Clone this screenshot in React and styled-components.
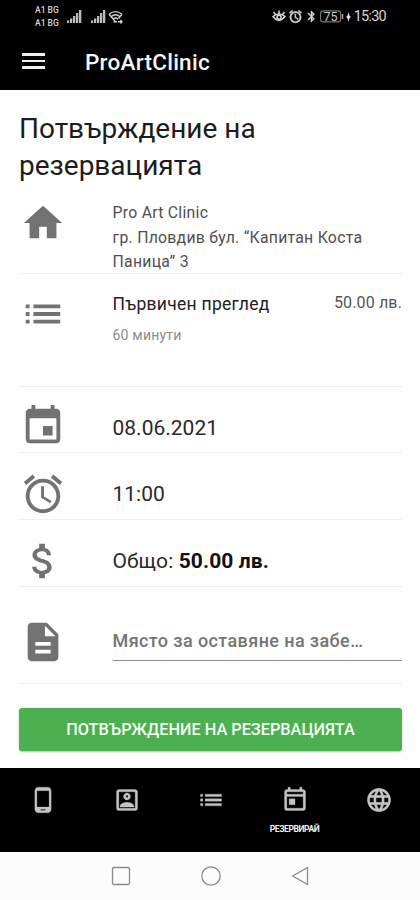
import React from "react";
import styled, { createGlobalStyle } from "styled-components";

const GlobalStyle = createGlobalStyle`
  * { box-sizing: border-box; }
  body { margin: 0; background: #fefefe; font-family: Roboto, "Noto Sans", sans-serif; }
`;

const Screen = styled.div`
  width: 420px;
  height: 900px;
  display: flex;
  flex-direction: column;
  background: #fefefe;
  overflow: hidden;
`;

const StatusBar = styled.div`
  height: 34px;
  flex: none;
  display: flex;
  justify-content: space-between;
  align-items: flex-start;
  padding: 4px 34px 0 35px;
  background: #000;
  color: #d6d6d6;
`;

const StatusGroup = styled.div`
  display: flex;
  align-items: center;
  height: 25px;
  gap: ${(p) => p.$gap || 0}px;
`;

const Carrier = styled.div`
  width: 24px;
  margin-right: 8px;
  font-size: 8.5px;
  line-height: 12.5px;
  font-weight: 500;
  white-space: nowrap;
`;

const Clock = styled.div`
  margin-left: 1px;
  font-size: 14.5px;
  letter-spacing: -0.75px;
  line-height: 25px;
`;

const AppBar = styled.header`
  height: 56px;
  flex: none;
  display: flex;
  align-items: center;
  padding-left: 22px;
  background: #000;
  color: #f6f6f6;
`;

const MenuIcon = styled.div`
  display: grid;
  gap: 4px;
  width: 23px;
  margin-right: 40px;
  margin-top: -2px;
`;

const MenuBar = styled.span`
  height: 2.6px;
  background: #f0f0f0;
`;

const AppTitle = styled.div`
  font-size: 22.5px;
  font-weight: 500;
  letter-spacing: 0.25px;
  line-height: 55px;
`;

const Content = styled.main`
  flex: 1;
  padding: 20px 18px 0 19px;
`;

const Title = styled.h1`
  margin: 0;
  height: 83px;
  font-size: 28px;
  line-height: 37px;
  font-weight: 400;
  letter-spacing: 0;
  color: #1c1c1c;
`;

const Row = styled.section`
  height: ${(p) => p.$height}px;
  display: flex;
  align-items: flex-start;
  padding-top: ${(p) => p.$top || 0}px;
  border-bottom: 1px solid #efefef;
`;

const RowIcon = styled.div`
  flex: none;
  width: 93.5px;
  height: 46px;
  margin-top: ${(p) => p.$shift || 0}px;
  padding-left: 0.5px;
  color: #727272;
  svg { display: block; }
`;

const RowBody = styled.div`
  flex: 1;
  min-width: 0;
`;

const Address = styled.div`
  padding-top: 1px;
  font-size: 15.8px;
  line-height: 24.5px;
  letter-spacing: 0.26px;
  color: #505050;
`;

const ServiceHead = styled.div`
  display: flex;
  justify-content: space-between;
  line-height: 24px;
`;

const ServiceName = styled.div`
  font-size: 17.5px;
  letter-spacing: 0.28px;
  color: #222;
`;

const Price = styled.div`
  font-size: 16px;
  line-height: 22px;
  letter-spacing: 0.15px;
  color: #555;
`;

const Duration = styled.div`
  margin-top: 10px;
  font-size: 14px;
  line-height: 18px;
  letter-spacing: 0.2px;
  color: #8c8c8c;
`;

const Value = styled.div`
  font-size: 21px;
  line-height: 26px;
  letter-spacing: ${(p) => p.$spacing || 0}px;
  color: #2a2a2a;
  b { font-weight: 700; color: #111; }
`;

const NoteField = styled.div`
  height: 33px;
  padding-top: 1px;
  border-bottom: 1px solid #8f8f8f;
  font-size: 18px;
  line-height: 24px;
  font-weight: 500;
  letter-spacing: 0.4px;
  color: #757575;
  white-space: nowrap;
`;

const ConfirmButton = styled.button`
  display: block;
  width: 383px;
  height: 43px;
  margin: 24px 0 0;
  padding: 0;
  border: 0;
  border-radius: 3px;
  background: #4caf50;
  box-shadow: 0 1px 2px rgba(0, 0, 0, 0.28);
  color: #f6fff6;
  font: 500 16.3px/43px Roboto, "Noto Sans", sans-serif;
  white-space: nowrap;
`;

const TabBar = styled.nav`
  height: 84px;
  flex: none;
  display: grid;
  grid-template-columns: repeat(5, 84px);
  background: #000;
  color: #c4c4c4;
`;

const Tab = styled.div`
  display: flex;
  flex-direction: column;
  align-items: center;
  padding: 17.5px 0 0 1px;
  svg { display: block; }
`;

const TabLabel = styled.span`
  margin-top: 10px;
  font-size: 8.5px;
  line-height: 10px;
  font-weight: 700;
  letter-spacing: -0.4px;
  color: #f0f0f0;
`;

const SystemNav = styled.div`
  height: 48px;
  flex: none;
  display: flex;
  justify-content: center;
  align-items: center;
  gap: 68px;
  padding-left: 1px;
  background: #fcfcfc;
  svg { display: block; }
`;

const paths = {
  home: "M10 20v-6h4v6h5v-8h3L12 3 2 12h3v8z",
  list: "M3 13h2v-2H3v2zm0 4h2v-2H3v2zm0-8h2V7H3v2zm4 4h14v-2H7v2zm0 4h14v-2H7v2zM7 7v2h14V7H7z",
  event:
    "M17 12h-5v5h5v-5zM16 1v2H8V1H6v2H5c-1.11 0-1.99.9-1.99 2L3 19c0 1.1.89 2 2 2h14c1.1 0 2-.9 2-2V5c0-1.1-.9-2-2-2h-1V1h-2zm3 18H5V8h14v11z",
  alarm:
    "M22 5.72l-4.6-3.86-1.29 1.53 4.6 3.86L22 5.72zM7.88 3.39L6.6 1.86 2 5.71l1.29 1.53 4.59-3.85zM12.5 8H11v6l4.75 2.85.75-1.23-4-2.37V8zM12 4c-4.97 0-9 4.03-9 9s4.02 9 9 9c4.97 0 9-4.03 9-9s-4.03-9-9-9zm0 16c-3.87 0-7-3.13-7-7s3.13-7 7-7 7 3.13 7 7-3.13 7-7 7z",
  money:
    "M11.8 10.9c-2.27-.59-3-1.2-3-2.15 0-1.09 1.01-1.85 2.7-1.85 1.78 0 2.44.85 2.5 2.1h2.21c-.07-1.72-1.12-3.3-3.21-3.81V3h-3v2.16c-1.94.42-3.5 1.68-3.5 3.61 0 2.31 1.91 3.46 4.7 4.13 2.5.6 3 1.48 3 2.41 0 .69-.49 1.79-2.7 1.79-2.06 0-2.87-.92-2.98-2.1h-2.2c.12 2.19 1.76 3.42 3.68 3.83V21h3v-2.15c1.95-.37 3.5-1.5 3.5-3.55 0-2.84-2.43-3.81-4.7-4.4z",
  note:
    "M14 2H6c-1.1 0-1.99.9-1.99 2L4 20c0 1.1.89 2 1.99 2H18c1.1 0 2-.9 2-2V8l-6-6zm2 16H8v-2h8v2zm0-4H8v-2h8v2zm-3-5V3.5L18.500 9H13z",
  phone:
    "M16 1H8C6.340 1 5 2.340 5 4v16c0 1.660 1.340 3 3 3h8c1.660 0 3-1.340 3-3V4c0-1.660-1.340-3-3-3zm-2 20h-4v-1h4v1zm3.250-3H6.750V4h10.500v14z",
  contact:
    "M19 3H5c-1.110 0-2 .9-2 2v14c0 1.100.890 2 2 2h14c1.100 0 2-.9 2-2V5c0-1.100-.9-2-2-2zm0 16H5V5h14v14zM12 12c1.650 0 3-1.350 3-3s-1.350-3-3-3-3 1.350-3 3 1.350 3 3 3zm0-4c.550 0 1 .450 1 1s-.450 1-1 1-1-.450-1-1 .450-1 1-1zm6 9.580c0-2.500-3.970-3.580-6-3.580s-6 1.080-6 3.580V18h12v-.42z",
  today:
    "M19 3h-1V1h-2v2H8V1H6v2H5c-1.110 0-1.990.9-1.990 2L3 19c0 1.100.890 2 2 2h14c1.100 0 2-.9 2-2V5c0-1.100-.9-2-2-2zm0 16H5V9h14v10zm0-12H5V5h14v2zM7 11h5v5H7z",
  globe:
    "M11.990 2C6.470 2 2 6.480 2 12s4.470 10 9.990 10C17.520 22 22 17.520 22 12S17.520 2 11.990 2zm6.930 6h-2.950c-.320-1.250-.780-2.450-1.380-3.560 1.840.630 3.370 1.910 4.330 3.560zM12 4.040c.830 1.200 1.480 2.530 1.910 3.960h-3.820c.430-1.430 1.080-2.760 1.910-3.960zM4.260 14C4.100 13.360 4 12.690 4 12s.1-1.360.260-2h3.380c-.080.660-.140 1.320-.140 2s.060 1.340.140 2H4.260zm.820 2h2.950c.320 1.250.780 2.450 1.380 3.560-1.840-.630-3.370-1.900-4.330-3.560zm2.950-8H5.080c.960-1.660 2.490-2.930 4.330-3.560C8.810 5.550 8.350 6.750 8.030 8zM12 19.960c-.830-1.200-1.480-2.530-1.910-3.960h3.820c-.430 1.430-1.080 2.760-1.910 3.960zM14.340 14H9.660c-.090-.660-.160-1.320-.160-2s.070-1.350.160-2h4.680c.090.650.160 1.320.160 2s-.070 1.340-.160 2zm.250 5.560c.600-1.110 1.060-2.310 1.380-3.560h2.950c-.960 1.650-2.490 2.930-4.330 3.560zM16.360 14c.080-.660.140-1.320.140-2s-.060-1.340-.140-2h3.380c.160.640.260 1.310.260 2s-.1 1.360-.260 2h-3.380z",
  bluetooth:
    "M17.710 7.710L12 2h-1v7.590L6.410 5 5 6.410 10.590 12 5 17.590 6.410 19 11 14.410V22h1l5.710-5.710-4.300-4.290 4.300-4.290zM13 5.830l1.880 1.880L13 9.590V5.830zm1.880 10.460L13 18.170v-3.760l1.880 1.880z",
};

function Icon({ name, size = 46, weight = 0 }) {
  return (
    <svg
      width={size}
      height={size}
      viewBox="0 0 24 24"
      fill="currentColor"
      stroke="currentColor"
      strokeWidth={weight}
      aria-hidden="true"
    >
      <path fillRule="evenodd" d={paths[name]} />
    </svg>
  );
}

function Signal() {
  return (
    <svg width="15" height="13" viewBox="0 0 15 13" fill="#bdbdbd">
      <path d="M0 10.500h2.200V13H0zM3 8.500h2.300V13H3zM6 6h2.300v7H6zM9 3h2.300v10H9zM12 0h2.300v13H12z" />
    </svg>
  );
}

function Wifi() {
  return (
    <svg width="15" height="14" viewBox="0 0 15 14" fill="none" stroke="#d0d0d0" strokeWidth="1.4">
      <path d="M1 4.200Q7.500-1 14 4.200M3 6.800Q7.500 2.800 12 6.800M5 9.200Q7.500 7 10 9.200M1 4.200L7 11M14 4.200L10.500 8.500M5.500 11.800H9M10 11.800h4M12.500 10l1.500 1.800-1.500 1.700" />
    </svg>
  );
}

function EyeComfort() {
  return (
    <svg width="14" height="13" viewBox="0 0 14 13" fill="none" stroke="#d8d8d8" strokeWidth="1.500">
      <path d="M1 6.500Q7 1.500 13 6.500Q7 14 1 6.500ZM7 3.500V.5M3.500 4.500L1.500 2M10.500 4.500l2-2.500" />
      <circle cx="7" cy="7.200" r="2" />
    </svg>
  );
}

function Battery() {
  return (
    <svg width="24" height="13" viewBox="0 0 24 13">
      <rect x=".6" y=".9" width="20" height="11" rx="2.500" fill="none" stroke="#777" strokeWidth="1.100" />
      <path d="M22.500 4v5" stroke="#aaa" strokeWidth="1.500" />
      <text x="10.600" y="10.800" textAnchor="middle" fontFamily="Roboto, sans-serif" fontSize="12.500" fill="#c8c8c8">75</text>
    </svg>
  );
}

function Bolt() {
  return (
    <svg width="5" height="10" viewBox="0 0 5 10" fill="#ddd">
      <path d="M2.500 0L3.500 3.700 5 5 3.500 6.300 2.500 10 1.500 6.300 0 5l1.500-1.300z" />
    </svg>
  );
}

const tabs = [
  { icon: "phone" },
  { icon: "contact" },
  { icon: "list" },
  { icon: "today", label: "РЕЗЕРВИРАЙ" },
  { icon: "globe" },
];

export default function App() {
  return (
    <>
      <GlobalStyle />
      <Screen>
        <StatusBar>
          <StatusGroup>
            <Carrier>
              A1 BG
              <br />
              A1 BG
            </Carrier>
            <StatusGroup $gap={9}>
              <Signal />
              <Signal />
            </StatusGroup>
            <StatusGroup $gap={2}>
              <span />
              <Wifi />
            </StatusGroup>
          </StatusGroup>
          <StatusGroup $gap={2}>
            <EyeComfort />
            <Icon name="alarm" size={15} weight={0.8} />
            <Icon name="bluetooth" size={13} weight={0.8} />
            <Battery />
            <Bolt />
            <Clock>15:30</Clock>
          </StatusGroup>
        </StatusBar>
        <AppBar>
          <MenuIcon>
            <MenuBar />
            <MenuBar />
            <MenuBar />
          </MenuIcon>
          <AppTitle>ProArtClinic</AppTitle>
        </AppBar>
        <Content>
          <Title>
            Потвърждение на
            <br />
            резервацията
          </Title>
          <Row $height={81} $top={7}>
            <RowIcon><Icon name="home" /></RowIcon>
            <RowBody>
              <Address>
                Pro Art Clinic
                <br />
                гр. Пловдив бул. “Капитан Коста
                <br />
                Паница” 3
              </Address>
            </RowBody>
          </Row>
          <Row $height={113} $top={18}>
            <RowIcon $shift={-1}><Icon name="list" /></RowIcon>
            <RowBody>
              <ServiceHead>
                <ServiceName>Първичен преглед</ServiceName>
                <Price>50.00 лв.</Price>
              </ServiceHead>
              <Duration>60 минути</Duration>
            </RowBody>
          </Row>
          <Row $height={66} $top={28}>
            <RowIcon $shift={-12}><Icon name="event" /></RowIcon>
            <RowBody><Value>08.06.2021</Value></RowBody>
          </Row>
          <Row $height={67} $top={28}>
            <RowIcon $shift={-10}><Icon name="alarm" /></RowIcon>
            <RowBody><Value>11:00</Value></RowBody>
          </Row>
          <Row $height={67} $top={28}>
            <RowIcon $shift={-10}><Icon name="money" /></RowIcon>
            <RowBody><Value $spacing={0.1}>Общо: <b>50.00 лв.</b></Value></RowBody>
          </Row>
          <Row $height={97} $top={41}>
            <RowIcon $shift={-9}><Icon name="note" /></RowIcon>
            <RowBody><NoteField>Място за оставяне на забе…</NoteField></RowBody>
          </Row>
          <ConfirmButton>ПОТВЪРЖДЕНИЕ НА РЕЗЕРВАЦИЯТА</ConfirmButton>
        </Content>
        <TabBar>
          {tabs.map((tab) => (
            <Tab key={tab.icon}>
              <Icon name={tab.icon} size={28} weight={0.25} />
              {tab.label && <TabLabel>{tab.label}</TabLabel>}
            </Tab>
          ))}
        </TabBar>
        <SystemNav>
          <svg width="22" height="22" viewBox="0 0 22 22" fill="none" stroke="#8a8a8a" strokeWidth="1.300">
            <rect x="2.500" y="2.500" width="17" height="17" rx="1.500" />
          </svg>
          <svg width="22" height="22" viewBox="0 0 22 22" fill="none" stroke="#8a8a8a" strokeWidth="1.300">
            <circle cx="11" cy="11" r="9.200" />
          </svg>
          <svg width="22" height="22" viewBox="0 0 22 22" fill="none" stroke="#8a8a8a" strokeWidth="1.300" strokeLinejoin="round">
            <path d="M2.500 11L17.500 2.500v17z" />
          </svg>
        </SystemNav>
      </Screen>
    </>
  );
}
